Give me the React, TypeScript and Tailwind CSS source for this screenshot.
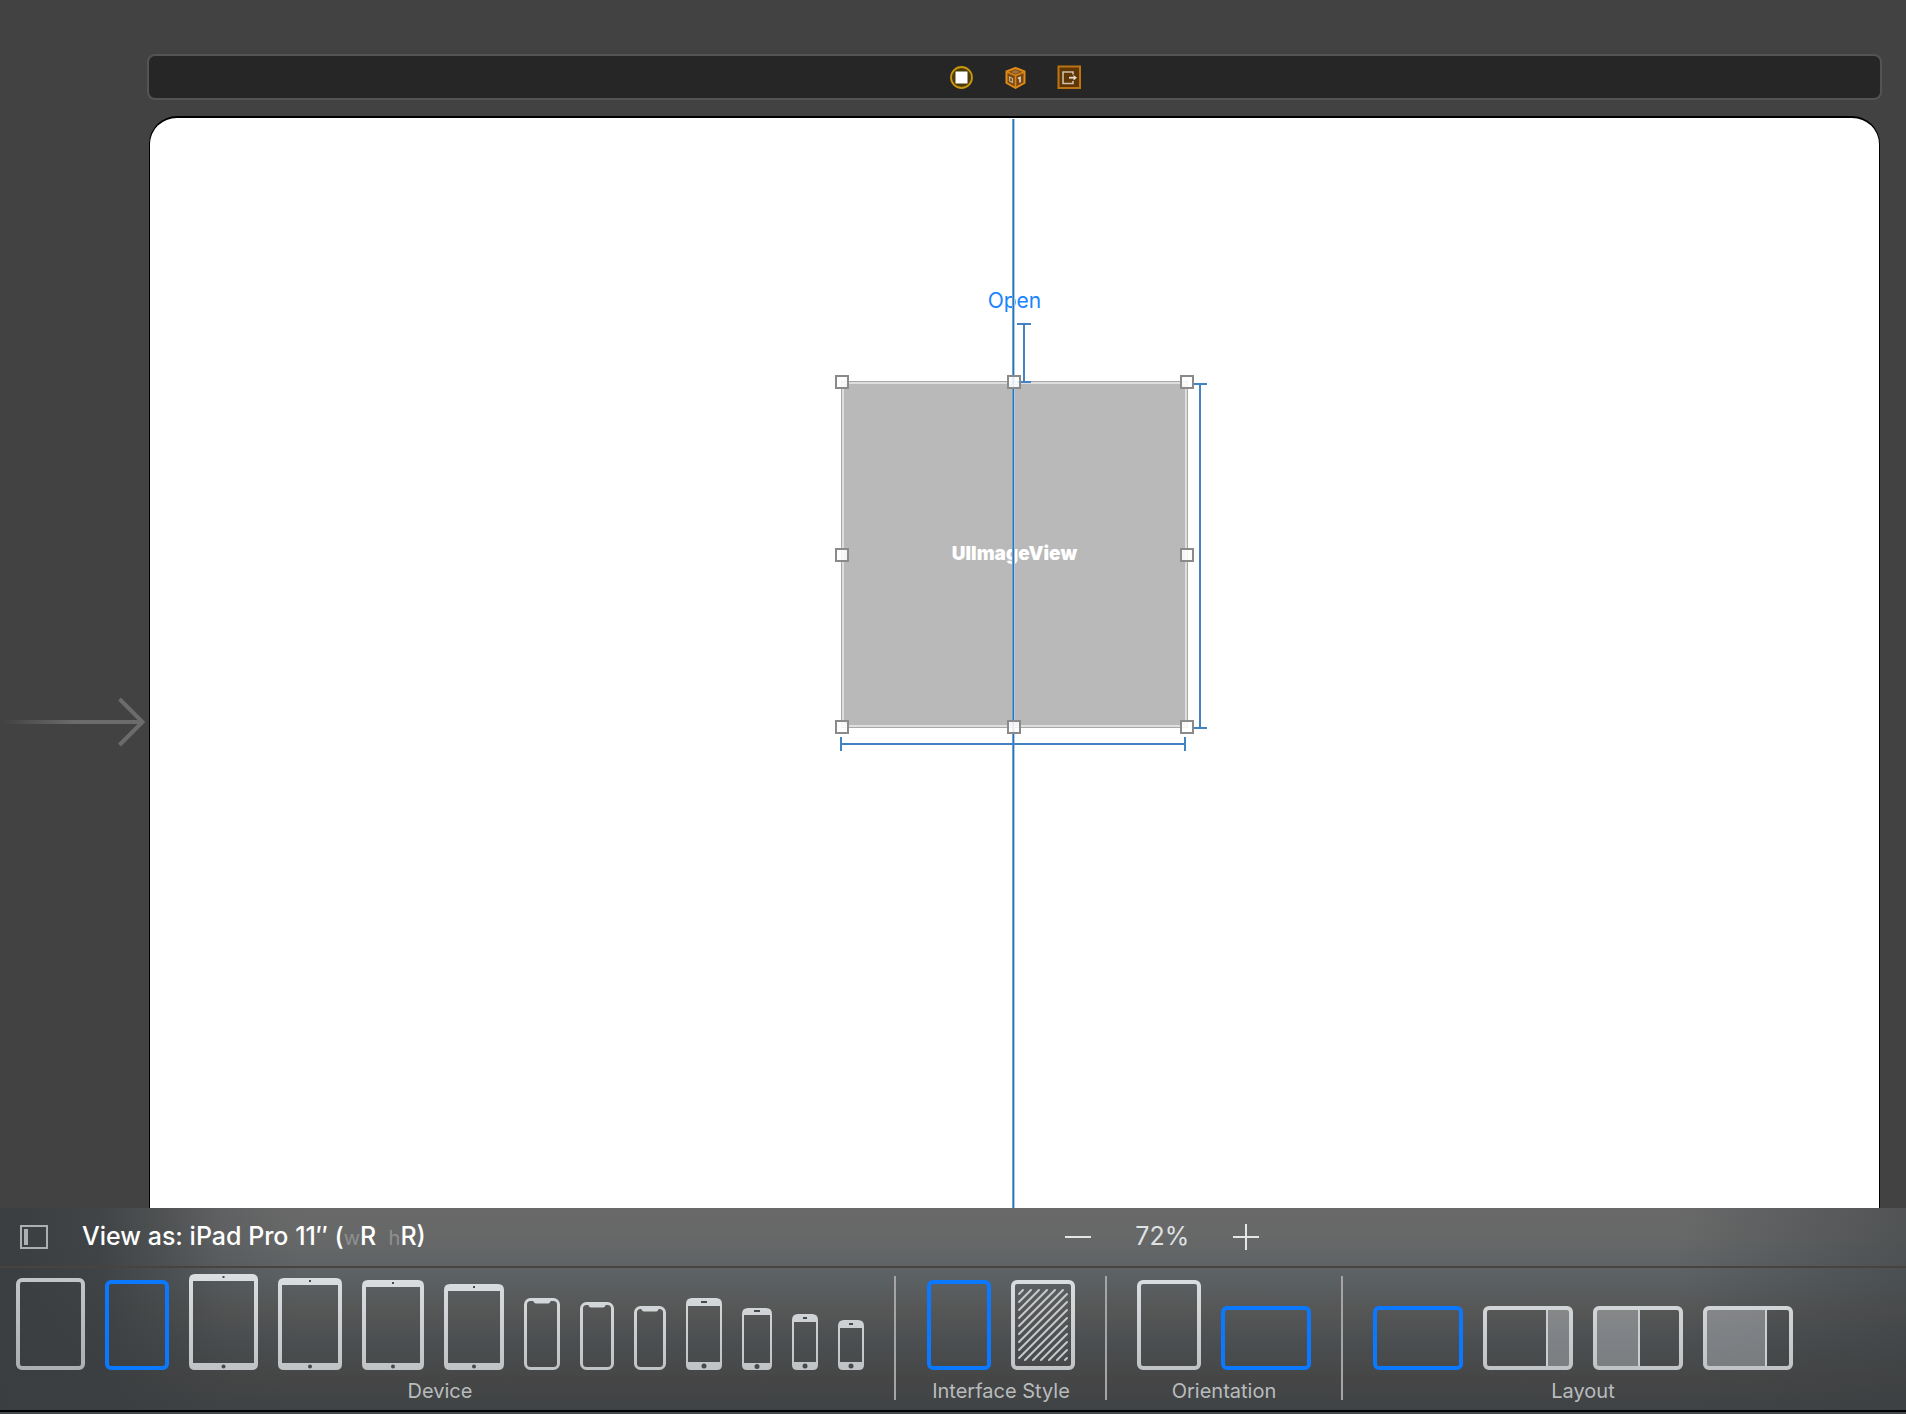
import React, { useId, useState } from "react";

type GlyphProps = { w: number; h: number; active?: boolean };

const BLUE = "#0a78ff";

const Glyph: React.FC<
  GlyphProps & { children: (fill: string) => React.ReactNode }
> = ({ w, h, active, children }) => {
  const id = useId();
  return (
    <svg width={w} height={h} viewBox={`0 0 ${w} ${h}`} className="block">
      <defs>
        <linearGradient
          id={id}
          gradientUnits="userSpaceOnUse"
          x1="0"
          y1={h - 96}
          x2="0"
          y2={h}
        >
          <stop offset="0" stopColor="#dcdfe1" />
          <stop offset="1" stopColor="#bfc3c5" />
        </linearGradient>
      </defs>
      {children(active ? BLUE : `url(#${id})`)}
    </svg>
  );
};

const Frame: React.FC<GlyphProps & { children?: React.ReactNode }> = ({
  w,
  h,
  active,
  children,
}) => (
  <Glyph w={w} h={h} active={active}>
    {(fill) => (
      <>
        {children}
        <rect
          x="2"
          y="2"
          width={w - 4}
          height={h - 4}
          rx="4"
          fill="none"
          stroke={fill}
          strokeWidth="4"
        />
      </>
    )}
  </Glyph>
);

const Tablet: React.FC<GlyphProps> = ({ w, h }) => (
  <Glyph w={w} h={h}>
    {(fill) => (
      <>
        <path
          fillRule="evenodd"
          fill={fill}
          d={`M6 0H${w - 6}Q${w} 0 ${w} 6V${h - 6}Q${w} ${h} ${w - 6} ${h}H6Q0 ${h} 0 ${h - 6}V6Q0 0 6 0ZM4 7V${h - 7}H${w - 4}V7Z`}
        />
        <rect x={w / 2 - 1} y="2" width="2" height="2" fill="#45494b" />
        <circle cx={w / 2} cy={h - 3.5} r="2" fill="#45494b" />
      </>
    )}
  </Glyph>
);

const NotchPhone: React.FC<GlyphProps> = ({ w, h }) => (
  <Glyph w={w} h={h}>
    {(fill) => (
      <>
        <rect
          x="1.5"
          y="1.5"
          width={w - 3}
          height={h - 3}
          rx="5"
          fill="none"
          stroke={fill}
          strokeWidth="3"
        />
        <path
          fill={fill}
          d={`M${w / 2 - 9} 2H${w / 2 + 9}Q${w / 2 + 8} 5.5 ${w / 2 + 6} 5.5H${w / 2 - 6}Q${w / 2 - 8} 5.5 ${w / 2 - 9} 2Z`}
        />
      </>
    )}
  </Glyph>
);

const HomePhone: React.FC<GlyphProps & { bezel: number; speaker: number }> = ({
  w,
  h,
  bezel,
  speaker,
}) => (
  <Glyph w={w} h={h}>
    {(fill) => (
      <>
        <path
          fillRule="evenodd"
          fill={fill}
          d={`M6 0H${w - 6}Q${w} 0 ${w} 6V${h - 5}Q${w} ${h} ${w - 5} ${h}H5Q0 ${h} 0 ${h - 5}V6Q0 0 6 0ZM2 ${bezel}V${h - bezel}H${w - 2}V${bezel}Z`}
        />
        <rect
          x={(w - speaker) / 2}
          y={bezel === 7 ? 2 : 3}
          width={speaker}
          height="2"
          fill="#45494b"
        />
        <circle cx={w / 2} cy={h - bezel / 2} r="2.5" fill="#45494b" />
      </>
    )}
  </Glyph>
);

const Hatch: React.FC = () => (
  <g stroke="#c6c9cb" strokeWidth="2" strokeLinecap="round">
    {Array.from({ length: 15 }, (_, i) => {
      const c = 22 + i * 8;
      const x1 = Math.max(8, c - 80);
      const x2 = Math.min(56, c - 10);
      return <line key={c} x1={x1} y1={c - x1} x2={x2} y2={c - x2} />;
    })}
  </g>
);

const Split: React.FC<{ at: number; side: "left" | "right" }> = ({
  at,
  side,
}) => (
  <>
    <rect
      x={side === "left" ? 3 : at}
      y="3"
      width={side === "left" ? at - 3 : 87 - at}
      height="58"
      fill="#f4faff"
      fillOpacity="0.3"
    />
    <rect x={at} y="3" width="2" height="58" fill="#cbced0" />
  </>
);

type Option = { name: string; draw: (active: boolean) => React.ReactNode };

const devices: Option[] = [
  {
    name: "iPad Pro 12.9″",
    draw: (a) => (
      <div className={a ? "" : "opacity-85"}>
        <Frame w={69} h={92} active={a} />
      </div>
    ),
  },
  { name: "iPad Pro 11″", draw: (a) => <Frame w={64} h={90} active={a} /> },
  { name: "iPad Pro 12.9″ (2nd)", draw: () => <Tablet w={69} h={96} /> },
  { name: "iPad Pro 10.5″", draw: () => <Tablet w={64} h={92} /> },
  { name: "iPad 9.7″", draw: () => <Tablet w={62} h={90} /> },
  { name: "iPad mini", draw: () => <Tablet w={60} h={86} /> },
  { name: "iPhone XS Max", draw: () => <NotchPhone w={36} h={72} /> },
  { name: "iPhone XR", draw: () => <NotchPhone w={34} h={68} /> },
  { name: "iPhone XS", draw: () => <NotchPhone w={32} h={64} /> },
  {
    name: "iPhone 8 Plus",
    draw: () => <HomePhone w={36} h={72} bezel={8} speaker={6} />,
  },
  {
    name: "iPhone 8",
    draw: () => <HomePhone w={30} h={62} bezel={7} speaker={6} />,
  },
  {
    name: "iPhone SE",
    draw: () => <HomePhone w={26} h={56} bezel={8} speaker={4} />,
  },
  {
    name: "iPhone 4s",
    draw: () => <HomePhone w={26} h={50} bezel={8} speaker={4} />,
  },
];

const styles: Option[] = [
  { name: "Light", draw: (a) => <Frame w={64} h={90} active={a} /> },
  {
    name: "Dark",
    draw: (a) => (
      <Frame w={64} h={90} active={a}>
        <Hatch />
      </Frame>
    ),
  },
];

const orientations: Option[] = [
  { name: "Portrait", draw: (a) => <Frame w={64} h={90} active={a} /> },
  { name: "Landscape", draw: (a) => <Frame w={90} h={64} active={a} /> },
];

const layouts: Option[] = [
  { name: "Full screen", draw: (a) => <Frame w={90} h={64} active={a} /> },
  {
    name: "One third",
    draw: (a) => (
      <Frame w={90} h={64} active={a}>
        <Split at={63} side="right" />
      </Frame>
    ),
  },
  {
    name: "Half",
    draw: (a) => (
      <Frame w={90} h={64} active={a}>
        <Split at={45} side="left" />
      </Frame>
    ),
  },
  {
    name: "Two thirds",
    draw: (a) => (
      <Frame w={90} h={64} active={a}>
        <Split at={62} side="left" />
      </Frame>
    ),
  },
];

const Group: React.FC<{
  label: string;
  options: Option[];
  initial: number;
  className: string;
}> = ({ label, options, initial, className }) => {
  const [selected, setSelected] = useState(initial);

  return (
    <div className={`flex flex-col ${className}`}>
      <div className="flex h-24 items-end gap-5">
        {options.map((option, i) => (
          <button
            key={option.name}
            type="button"
            aria-label={option.name}
            aria-pressed={i === selected}
            onClick={() => setSelected(i)}
          >
            {option.draw(i === selected)}
          </button>
        ))}
      </div>
      <div className="mt-2 text-center text-xl leading-[26px] text-[#b9bcbe]">
        {label}
      </div>
    </div>
  );
};

const Separator: React.FC = () => (
  <div className="mt-[2px] mb-1 w-[2px] shrink-0 bg-[#a5a5a5]" />
);

const Dock: React.FC = () => (
  <div className="mr-6 ml-[147px] flex h-[46px] items-center justify-center gap-[30px] rounded-lg border-2 border-[#545454] bg-[#262626]">
    <button type="button" aria-label="View Controller">
      <svg width="24" height="24" viewBox="0 0 24 24" className="block">
        <circle
          cx="12.5"
          cy="12.5"
          r="10.5"
          fill="#4c3c05"
          stroke="#c9980f"
          strokeWidth="1.8"
        />
        <rect x="6.5" y="6.5" width="12" height="12" fill="#fff" />
      </svg>
    </button>
    <button type="button" aria-label="First Responder">
      <svg width="24" height="24" viewBox="0 0 24 24" className="block">
        <path
          d="M12.500 3L21.500 6.500V18L12.500 23L3.500 18V6.500Z"
          fill="#7a4810"
          stroke="#e08a18"
          strokeWidth="2"
          strokeLinejoin="round"
        />
        <path
          d="M4 7L12.500 10.500L21 7M12.500 10.500V22.500"
          fill="none"
          stroke="#d98518"
          strokeWidth="1.600"
        />
        <path d="M8 7L12.500 5L17 7L12.500 8.800Z" fill="#a3753c" />
        <path
          d="M6.500 12V16L9.500 17.500V13.500Z"
          fill="none"
          stroke="#c9b08c"
          strokeWidth="1.200"
        />
        <path
          d="M15 13.500L17 12.500V17.500"
          fill="none"
          stroke="#e6d8c3"
          strokeWidth="1.600"
        />
      </svg>
    </button>
    <button type="button" aria-label="Exit">
      <svg width="24" height="24" viewBox="0 0 24 24" className="block">
        <rect
          x="1.5"
          y="1.5"
          width="21.500"
          height="21.500"
          fill="#5e3705"
          stroke="#bd7412"
          strokeWidth="2"
        />
        <path
          d="M16 9.500V7H6V18.500H16V16"
          fill="none"
          stroke="#cfc0aa"
          strokeWidth="1.600"
        />
        <path d="M12 12.700H18" stroke="#e6dccd" strokeWidth="1.800" />
        <path d="M16.500 10L20 12.700L16.500 15.400Z" fill="#e6dccd" />
      </svg>
    </button>
  </div>
);

const EntryArrow: React.FC = () => (
  <svg
    width="149"
    height="56"
    viewBox="0 0 149 56"
    fill="none"
    stroke="#6b6b6b"
    strokeWidth="4"
    className="block"
  >
    <defs>
      <linearGradient
        id="entry-fade"
        gradientUnits="userSpaceOnUse"
        x1="2"
        y1="0"
        x2="74"
        y2="0"
      >
        <stop offset="0" stopColor="#6b6b6b" stopOpacity="0" />
        <stop offset="1" stopColor="#6b6b6b" />
      </linearGradient>
    </defs>
    <path d="M2 26H142V30H2Z" fill="url(#entry-fade)" stroke="none" />
    <path d="M119.500 5L142.500 28L119.500 51" />
  </svg>
);

const handles = [
  "left-0 top-0",
  "left-[calc(50%-1px)] top-0",
  "left-full top-0",
  "left-0 top-1/2",
  "left-full top-1/2",
  "left-0 top-full",
  "left-[calc(50%-1px)] top-full",
  "left-full top-full",
];

const ImageView: React.FC = () => (
  <div className="relative mt-[65px] flex size-[347px] items-center justify-center border border-[#a8a8a8] bg-[#b9b9b9]">
    <div className="absolute inset-0 border-2 border-[#dedede]" />
    <span className="text-[19px] font-black text-white">UIImageView</span>
    {/* centre guide, runs through the whole screen */}
    <div className="absolute -top-[263px] left-1/2 -ml-[3px] h-[2000px] w-[3px] border-r border-l border-r-[#a9cbea] border-l-[#6c9fd2] bg-[#2f73b3]" />
    <svg
      width="380"
      height="440"
      viewBox="0 0 380 440"
      fill="none"
      stroke="#4382c3"
      strokeWidth="2"
      className="absolute -top-[61px] -left-[3px]"
    >
      <path d="M178 3H192M185 3V61M178 61H192" />
      <path d="M353 63H368M361 63V407M353 407H368" />
      <path d="M2 423H346M2 416V430M346 416V430" />
    </svg>
    {/* resize handles */}
    <div className="absolute inset-0">
      {handles.map((position) => (
        <div
          key={position}
          className={`absolute -mt-[7px] -ml-[7px] size-[14px] border-2 border-[#8a8a8a] bg-white/85 ${position}`}
        />
      ))}
    </div>
  </div>
);

export default function App() {
  const [zoom, setZoom] = useState(72);

  return (
    <div className="flex h-screen flex-col overflow-hidden bg-[#424242] font-['Inter','Liberation_Sans',sans-serif]">
      <main className="flex min-h-0 flex-1 flex-col overflow-hidden pt-[54px]">
        <Dock />
        <div className="mt-4 flex min-h-0 flex-1">
          <div className="w-[149px] shrink-0 pt-[578px]">
            <EntryArrow />
          </div>
          <div className="mr-[26px] flex flex-1 flex-col items-center overflow-hidden rounded-t-[28px] border-x border-t-2 border-black bg-white pt-[168px]">
            <button
              type="button"
              className="text-[21px] leading-[30px] text-[#1a84ff]"
            >
              Open
            </button>
            <ImageView />
          </div>
        </div>
      </main>

      <footer className="shrink-0 border-b-2 border-[#44484a]">
        <div className="border-b-2 border-black bg-[linear-gradient(to_right,#3a3e40_0px,#3a3e40d9_100px,#3a3e4080_170px,#3a3e4033_220px,#3a3e4000_300px,#3a3e4000_88%,#3a3e4080_100%),linear-gradient(to_bottom,#69696a_0%,#676868_14%,#606466_26%,#5a5f61_38%,#565656_51%,#4b4f51_66%,#464646_84%,#3f4345_100%)]">
          <div className="flex h-[60px] items-center border-b-2 border-[#464340]">
            <div className="flex basis-[55%] items-center pl-5">
              <button type="button" aria-label="Toggle outline">
                <svg
                  width="28"
                  height="24"
                  viewBox="0 0 28 24"
                  className="block"
                >
                  <rect
                    x="1"
                    y="1"
                    width="26"
                    height="22"
                    fill="none"
                    stroke="#adb0b2"
                    strokeWidth="2"
                  />
                  <rect x="4" y="4" width="4" height="16" fill="#adb0b2" />
                </svg>
              </button>
              <button
                type="button"
                className="ml-[34px] text-[25px] font-medium whitespace-pre text-white"
              >
                View as: iPad Pro 11″ (
                <span className="text-xl font-normal text-[#8f9192]">w</span>R{" "}
                <span className="text-xl font-normal text-[#8f9192]"> h</span>
                R)
              </button>
            </div>
            <div className="flex items-center gap-11 pl-[17px] text-[25px] text-[#dfe1e2]">
              <button
                type="button"
                aria-label="Zoom out"
                onClick={() => setZoom((prev) => prev - 1)}
              >
                <svg width="26" height="26" className="block">
                  <path d="M0 13H26" stroke="#e3e5e6" strokeWidth="2" />
                </svg>
              </button>
              <button type="button">{zoom}%</button>
              <button
                type="button"
                aria-label="Zoom in"
                onClick={() => setZoom((prev) => prev + 1)}
              >
                <svg width="26" height="26" className="block">
                  <path
                    d="M0 13H26M13 0V26"
                    stroke="#e3e5e6"
                    strokeWidth="2"
                  />
                </svg>
              </button>
            </div>
          </div>

          <div className="flex py-[6px]">
            <Group
              label="Device"
              options={devices}
              initial={1}
              className="pr-[30px] pl-4"
            />
            <Separator />
            <Group
              label="Interface Style"
              options={styles}
              initial={0}
              className="pr-[30px] pl-[31px]"
            />
            <Separator />
            <Group
              label="Orientation"
              options={orientations}
              initial={1}
              className="px-[30px]"
            />
            <Separator />
            <Group
              label="Layout"
              options={layouts}
              initial={0}
              className="px-[30px]"
            />
          </div>
        </div>
      </footer>
    </div>
  );
}
